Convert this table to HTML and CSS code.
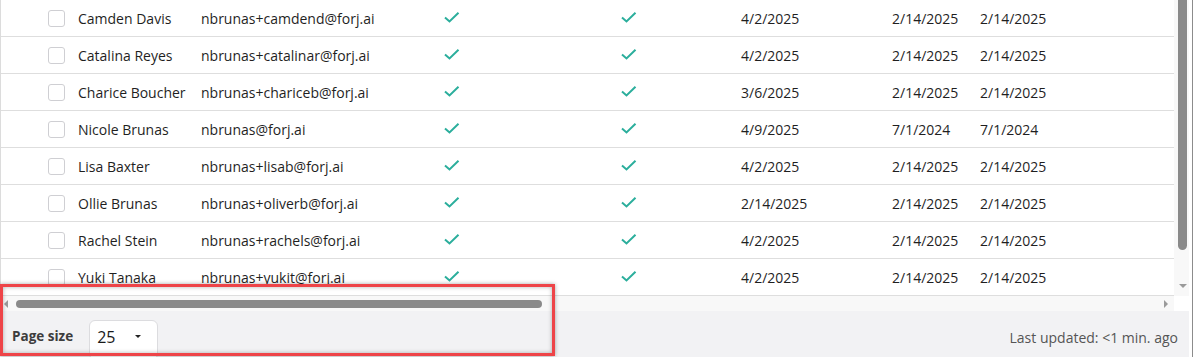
FILE: index.html
```html
<!DOCTYPE html>
<html>
<head>
<meta charset="utf-8">
<link rel="stylesheet" href="styles.css">
</head>
<body>
<div class="page">
  <div class="table-area">
    <div class="rows">
      <div class="row"><span></span><span class="cb"></span><span>Camden Davis</span><span>nbrunas+camdend@forj.ai</span><span class="chk"><svg width="16" height="12" viewBox="0 0 16 12"><polyline points="1,5.5 5.5,9.5 14.5,0.8"/></svg></span><span class="chk"><svg width="16" height="12" viewBox="0 0 16 12"><polyline points="1,5.5 5.5,9.5 14.5,0.8"/></svg></span><span>4/2/2025</span><span>2/14/2025</span><span>2/14/2025</span></div>
      <div class="row"><span></span><span class="cb"></span><span>Catalina Reyes</span><span>nbrunas+catalinar@forj.ai</span><span class="chk"><svg width="16" height="12" viewBox="0 0 16 12"><polyline points="1,5.5 5.5,9.5 14.5,0.8"/></svg></span><span class="chk"><svg width="16" height="12" viewBox="0 0 16 12"><polyline points="1,5.5 5.5,9.5 14.5,0.8"/></svg></span><span>4/2/2025</span><span>2/14/2025</span><span>2/14/2025</span></div>
      <div class="row"><span></span><span class="cb"></span><span>Charice Boucher</span><span>nbrunas+chariceb@forj.ai</span><span class="chk"><svg width="16" height="12" viewBox="0 0 16 12"><polyline points="1,5.5 5.5,9.5 14.5,0.8"/></svg></span><span class="chk"><svg width="16" height="12" viewBox="0 0 16 12"><polyline points="1,5.5 5.5,9.5 14.5,0.8"/></svg></span><span>3/6/2025</span><span>2/14/2025</span><span>2/14/2025</span></div>
      <div class="row"><span></span><span class="cb"></span><span>Nicole Brunas</span><span>nbrunas@forj.ai</span><span class="chk"><svg width="16" height="12" viewBox="0 0 16 12"><polyline points="1,5.5 5.5,9.5 14.5,0.8"/></svg></span><span class="chk"><svg width="16" height="12" viewBox="0 0 16 12"><polyline points="1,5.5 5.5,9.5 14.5,0.8"/></svg></span><span>4/9/2025</span><span>7/1/2024</span><span>7/1/2024</span></div>
      <div class="row"><span></span><span class="cb"></span><span>Lisa Baxter</span><span>nbrunas+lisab@forj.ai</span><span class="chk"><svg width="16" height="12" viewBox="0 0 16 12"><polyline points="1,5.5 5.5,9.5 14.5,0.8"/></svg></span><span class="chk"><svg width="16" height="12" viewBox="0 0 16 12"><polyline points="1,5.5 5.5,9.5 14.5,0.8"/></svg></span><span>4/2/2025</span><span>2/14/2025</span><span>2/14/2025</span></div>
      <div class="row"><span></span><span class="cb"></span><span>Ollie Brunas</span><span>nbrunas+oliverb@forj.ai</span><span class="chk"><svg width="16" height="12" viewBox="0 0 16 12"><polyline points="1,5.5 5.5,9.5 14.5,0.8"/></svg></span><span class="chk"><svg width="16" height="12" viewBox="0 0 16 12"><polyline points="1,5.5 5.5,9.5 14.5,0.8"/></svg></span><span>2/14/2025</span><span>2/14/2025</span><span>2/14/2025</span></div>
      <div class="row"><span></span><span class="cb"></span><span>Rachel Stein</span><span>nbrunas+rachels@forj.ai</span><span class="chk"><svg width="16" height="12" viewBox="0 0 16 12"><polyline points="1,5.5 5.5,9.5 14.5,0.8"/></svg></span><span class="chk"><svg width="16" height="12" viewBox="0 0 16 12"><polyline points="1,5.5 5.5,9.5 14.5,0.8"/></svg></span><span>4/2/2025</span><span>2/14/2025</span><span>2/14/2025</span></div>
      <div class="row"><span></span><span class="cb"></span><span>Yuki Tanaka</span><span>nbrunas+yukit@forj.ai</span><span class="chk"><svg width="16" height="12" viewBox="0 0 16 12"><polyline points="1,5.5 5.5,9.5 14.5,0.8"/></svg></span><span class="chk"><svg width="16" height="12" viewBox="0 0 16 12"><polyline points="1,5.5 5.5,9.5 14.5,0.8"/></svg></span><span>4/2/2025</span><span>2/14/2025</span><span>2/14/2025</span></div>
    </div>
    <div class="vscroll">
      <div class="vthumb"></div>
      <div class="vspacer"></div>
      <div class="arrow-down"></div>
    </div>
  </div>
  <div class="hscroll">
    <div class="arrow-left"></div>
    <div class="hthumb"></div>
    <div class="hspacer"></div>
    <div class="arrow-right"></div>
  </div>
  <div class="footer">
    <div class="pager">
      <span class="pager-label">Page size</span>
      <div class="select"><span class="select-value">25</span><span class="caret"></span></div>
    </div>
    <span class="updated">Last updated: &lt;1 min. ago</span>
  </div>
  <div class="highlight"></div>
</div>
</body>
</html>
```
FILE: styles.css
```css
html, body {
  margin: 0;
  padding: 0;
  background: #ffffff;
}
body {
  width: 1193px;
  height: 357px;
  overflow: hidden;
  font-family: "Open Sans", "Noto Sans", sans-serif;
  font-size: 14px;
  color: #1f1f1f;
}
.page {
  position: relative;
  width: 1189px;
  height: 357px;
  padding-right: 3px;
  border-right: 1px solid #8c8c8c;
  display: flex;
  flex-direction: column;
}
.table-area {
  display: flex;
  height: 296px;
  flex: none;
}
.rows {
  flex: 1;
  border-left: 1px solid #dcdcdc;
  overflow: hidden;
}
.row {
  display: grid;
  grid-template-columns: 47px 30px 123px 243px 177px 120px 151px 88px 1fr;
  align-items: center;
  height: 36px;
  border-bottom: 1px solid #dedede;
  white-space: nowrap;
}
.cb {
  width: 15px;
  height: 15px;
  border: 1.5px solid #cfcfd3;
  border-radius: 3px;
  background: #fff;
}
.chk {
  display: flex;
  align-items: center;
}
.chk svg polyline {
  fill: none;
  stroke: #2bae9c;
  stroke-width: 2;
}
.vscroll {
  width: 15px;
  flex: none;
  background: #f8f8f8;
  display: flex;
  flex-direction: column;
  align-items: center;
}
.vthumb {
  width: 9px;
  height: 250px;
  margin-left: 4px;
  margin-right: 2px;
  background: #8a8a8a;
  border-radius: 0 0 5px 5px;
  align-self: flex-start;
}
.vspacer { flex: 1; }
.arrow-down {
  width: 0;
  height: 0;
  border-left: 4px solid transparent;
  border-right: 4px solid transparent;
  border-top: 4px solid #9a9a9a;
  margin: 0 0 8px 2px;
}
.hscroll {
  height: 15px;
  flex: none;
  background: #f8f8f8;
  display: flex;
  align-items: center;
  margin-right: 15px;
}
.arrow-left {
  width: 0;
  height: 0;
  border-top: 4px solid transparent;
  border-bottom: 4px solid transparent;
  border-right: 4px solid #9a9a9a;
  margin-left: 4px;
  margin-right: 8px;
}
.hthumb {
  width: 526px;
  height: 8px;
  border-radius: 4px;
  background: #8a8a8a;
}
.hspacer { flex: 1; }
.arrow-right {
  width: 0;
  height: 0;
  border-top: 4px solid transparent;
  border-bottom: 4px solid transparent;
  border-left: 4px solid #9a9a9a;
  margin-right: 6px;
}
.footer {
  flex: 1;
  background: #f2f2f4;
  display: flex;
  justify-content: space-between;
  align-items: flex-start;
  padding: 9px 11px 0 12px;
}
.pager {
  display: flex;
  align-items: flex-start;
  gap: 16px;
}
.pager-label {
  font-size: 13.5px;
  line-height: 18px;
  font-weight: 700;
  color: #3d3d3d;
  margin-top: 7px;
}
.select {
  width: 69px;
  height: 40px;
  background: #fff;
  border: 1px solid #dcdcdf;
  border-radius: 6px;
  display: flex;
  align-items: flex-start;
  padding: 0 0 0 7px;
  box-sizing: border-box;
}
.select-value {
  font-size: 16px;
  line-height: 22px;
  color: #1a1a1a;
  margin-top: 5px;
  width: 38px;
}
.caret {
  width: 0;
  height: 0;
  border-left: 3.5px solid transparent;
  border-right: 3.5px solid transparent;
  border-top: 3.5px solid #222;
  margin-top: 14px;
}
.updated {
  color: #555;
  line-height: 19px;
  margin-top: 8px;
}
.highlight {
  position: absolute;
  left: 0;
  top: 284px;
  width: 549px;
  height: 66px;
  border: 3px solid #ee4448;
  box-shadow: 0 0 4px rgba(0,0,0,0.35), inset 0 0 4px rgba(0,0,0,0.3);
  pointer-events: none;
}
```
